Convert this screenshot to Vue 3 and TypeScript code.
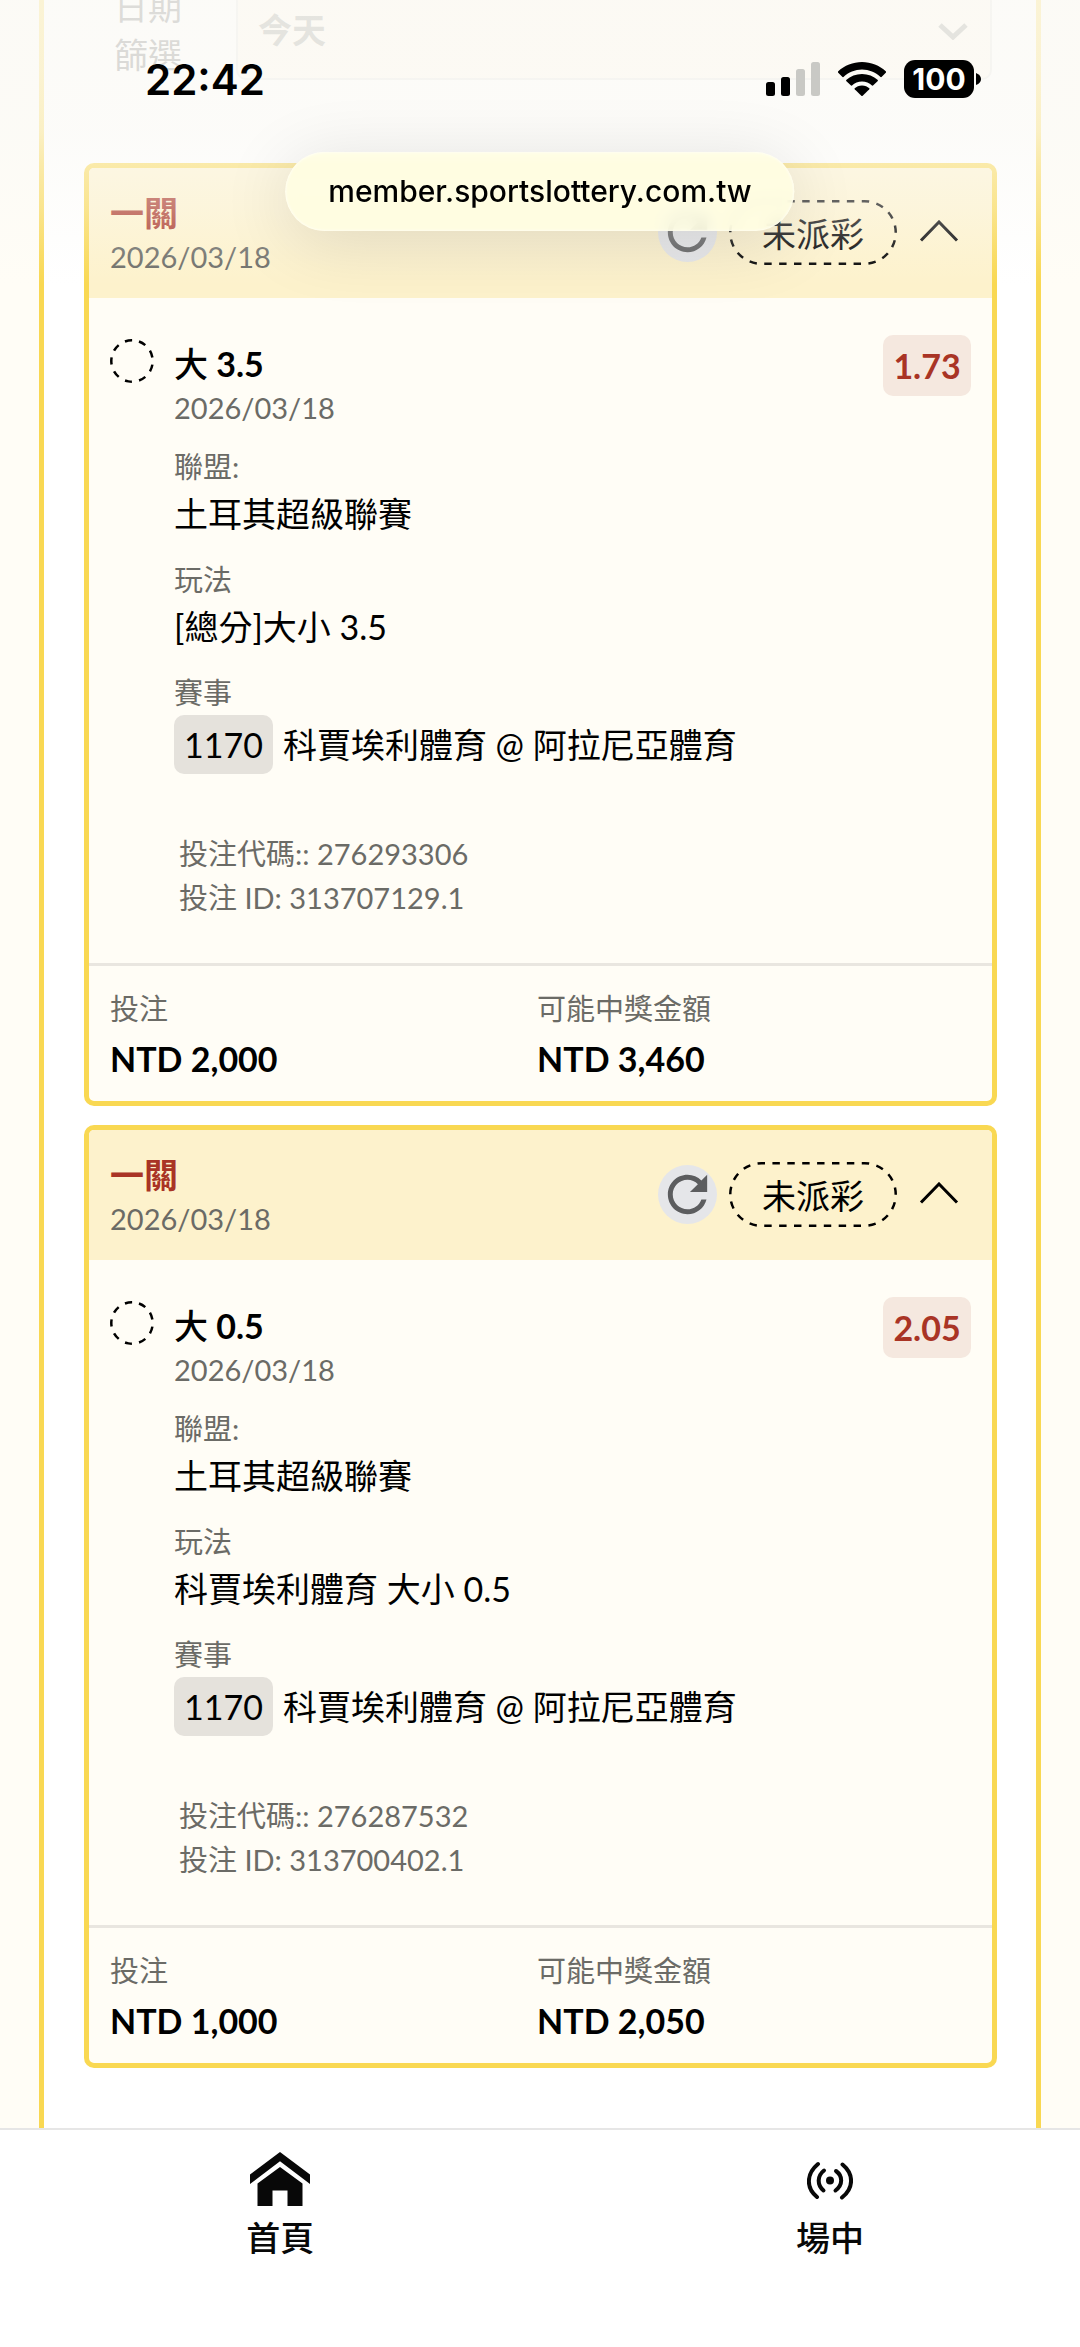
<script setup lang="ts">
interface Bet {
  id: string
  code: string
  date: string
  side: string
  line: string
  odds: string
  play: string
  stake: string
  payout: string
}

const bets: Bet[] = [
  {
    id: '313707129.1',
    code: '276293306',
    date: '2026/03/18',
    side: '大',
    line: '3.5',
    odds: '1.73',
    play: '[總分]大小 3.5',
    stake: 'NTD 2,000',
    payout: 'NTD 3,460',
  },
  {
    id: '313700402.1',
    code: '276287532',
    date: '2026/03/18',
    side: '大',
    line: '0.5',
    odds: '2.05',
    play: '科賈埃利體育 大小 0.5',
    stake: 'NTD 1,000',
    payout: 'NTD 2,050',
  },
]
</script>

<template>
  <div class="screen" lang="zh-Hant">
    <main class="content">
      <section class="panel">
        <div class="filter">
          <label class="filter-label" for="date-filter">日期篩選</label>
          <div class="filter-box">
            <select id="date-filter" class="filter-select">
              <option>今天</option>
            </select>
            <svg class="filter-arrow" viewBox="0 0 30 18" aria-hidden="true">
              <path d="M2 3 L15 15 L28 3" fill="none" stroke="currentColor" stroke-width="5" />
            </svg>
          </div>
        </div>

        <article v-for="bet in bets" :key="bet.id" class="card">
          <header class="card-head">
            <div class="card-title">
              <h2 class="parlay">一關</h2>
              <p class="date">{{ bet.date }}</p>
            </div>
            <button type="button" class="refresh" aria-label="重新整理">
              <svg viewBox="0 0 24 24" aria-hidden="true">
                <path
                  fill="currentColor"
                  d="M17.65 6.35C16.2 4.9 14.21 4 12 4c-4.42 0-7.99 3.58-7.99 8s3.57 8 7.99 8c3.73 0 6.84-2.55 7.73-6h-2.08c-.82 2.33-3.04 4-5.65 4-3.31 0-6-2.69-6-6s2.69-6 6-6c1.66 0 3.14.69 4.22 1.78L13 11h7V4l-2.35 2.35z"
                />
              </svg>
            </button>
            <span class="status">
              <svg class="status-outline" viewBox="0 0 168 65" aria-hidden="true">
                <rect x="1.25" y="1.25" width="165.5" height="62.5" rx="31.25" fill="none" stroke="currentColor"
                  stroke-width="2.5" pathLength="405" stroke-dasharray="7.5 7.5" stroke-dashoffset="4" />
              </svg>
              未派彩
            </span>
            <button type="button" class="toggle" aria-label="收合">
              <svg viewBox="0 0 40 24" aria-hidden="true">
                <path d="M2 20.500 L20 2 L38 20.500" fill="none" stroke="currentColor" stroke-width="3" />
              </svg>
            </button>
          </header>

          <div class="card-body">
            <svg class="pending" viewBox="0 0 44 44" aria-hidden="true">
              <circle cx="22" cy="22" r="20.700" fill="none" stroke="currentColor" stroke-width="2.5"
                pathLength="360" stroke-dasharray="20 20" transform="rotate(10 22 22)" />
            </svg>
            <div class="details">
              <h3 class="pick"><span class="side">{{ bet.side }}</span> {{ bet.line }}</h3>
              <p class="date">{{ bet.date }}</p>
              <dl class="fields">
                <div class="field">
                  <dt>聯盟:</dt>
                  <dd>土耳其超級聯賽</dd>
                </div>
                <div class="field">
                  <dt>玩法</dt>
                  <dd>{{ bet.play }}</dd>
                </div>
                <div class="field">
                  <dt>賽事</dt>
                  <dd class="match"><span class="match-no">1170</span>科賈埃利體育 @ 阿拉尼亞體育</dd>
                </div>
              </dl>
              <div class="codes">
                <p>投注代碼:: {{ bet.code }}</p>
                <p>投注 ID: {{ bet.id }}</p>
              </div>
            </div>
            <span class="odds">{{ bet.odds }}</span>
          </div>

          <dl class="card-foot">
            <div>
              <dt>投注</dt>
              <dd>{{ bet.stake }}</dd>
            </div>
            <div>
              <dt>可能中獎金額</dt>
              <dd>{{ bet.payout }}</dd>
            </div>
          </dl>
        </article>
      </section>
    </main>

    <nav class="tabs">
      <a class="tab" href="#home">
        <svg class="icon-home" viewBox="0 0 60 54" aria-hidden="true">
          <path fill="currentColor" d="M30 0 L60 22.500 V32 L30 9.300 L0 32 V22.500 Z" />
          <path fill="currentColor" d="M30 15 L52.500 31.500 V54 H37.500 V38.500 H22.500 V54 H7.500 V31.500 Z" />
        </svg>
        <span>首頁</span>
      </a>
      <a class="tab" href="#live">
        <svg class="icon-live" viewBox="0 0 46 54" aria-hidden="true">
          <g fill="none" stroke="currentColor" stroke-width="4" stroke-linecap="round">
            <path d="M11 12 C-1 22 -1 36 10 45" />
            <path d="M17 18.500 C10 24 10 33 16.500 38.500" />
            <path d="M29 19 C36 24 36 33 28.500 38.500" />
            <path d="M35.500 12.500 C47 22 47 36 35 45.500" />
          </g>
          <circle cx="23" cy="28.500" r="4" fill="currentColor" />
        </svg>
        <span>場中</span>
      </a>
    </nav>

    <div class="veil"></div>
    <div class="system-bar">
      <time class="clock">22:42</time>
      <div class="indicators">
        <svg class="signal" viewBox="0 0 54 34" aria-hidden="true">
          <rect x="0" y="20" width="9" height="14" rx="2.500" />
          <rect x="15" y="15" width="9" height="19" rx="2.500" />
          <g fill="#c9c9c5">
            <rect x="30" y="7" width="9" height="27" rx="2.500" />
            <rect x="45" y="0" width="9" height="34" rx="2.500" />
          </g>
        </svg>
        <svg class="wifi" viewBox="0 0 48 34" aria-hidden="true">
          <path d="M24 0 C15 0 6.500 3.500 0 9.500 Q-.3 10 0 10.500 L4.500 15 Q5 15.300 5.500 15 C10.500 10.300 17 7.500 24 7.500 S37.500 10.300 42.500 15 Q43 15.300 43.500 15 L48 10.500 Q48.300 10 48 9.500 C41.500 3.500 33 0 24 0 Z" />
          <path d="M24 12 C18 12 12.500 14.300 8.200 18 Q8 18.500 8.200 19 L13 23.500 Q13.500 23.800 14 23.500 C16.700 21 20.200 19.500 24 19.500 S31.300 21 34 23.500 Q34.500 23.800 35 23.500 L39.800 19 Q40 18.500 39.800 18 C35.500 14.300 30 12 24 12 Z" />
          <path d="M24 23.500 C21 23.500 18.500 24.600 16.700 26.300 Q16.300 26.800 16.700 27.200 L23.300 33.700 Q24 34.300 24.700 33.700 L31.300 27.200 Q31.700 26.800 31.300 26.300 C29.500 24.600 27 23.500 24 23.500 Z" />
        </svg>
        <div class="battery">
          <span class="battery-level">100</span>
          <svg class="battery-tip" viewBox="0 0 5 12" aria-hidden="true">
            <path d="M0 0 Q5 2 5 6 T0 12 Z" />
          </svg>
        </div>
      </div>
    </div>
    <div class="address">member.sportslottery.com.tw</div>
  </div>
</template>

<style>
body {
  margin: 0;
  background: #fffdf6;
}
</style>

<style scoped>
.screen {
  position: relative;
  display: flex;
  flex-direction: column;
  min-height: 100vh;
  overflow: hidden;
  color: #000;
  background: #fffdf6;
  font-family: Lato, "Noto Sans CJK TC", sans-serif;
  font-size: 34px;
}

h2,
h3,
p,
dl,
dd {
  margin: 0;
}

button {
  padding: 0;
  border: 0;
  background: none;
  color: inherit;
  font: inherit;
}

svg {
  display: block;
}

.content {
  display: flex;
  flex: 1;
  padding: 0 39px;
}

/* The list is scrolled, so the filter row starts above the visible area. */
.panel {
  display: flex;
  flex: 1;
  flex-direction: column;
  gap: 19px;
  margin-top: -18px;
  padding: 0 39px 60px 40px;
  border: solid #f9d852;
  border-width: 0 5px;
  background: #fff;
}

.filter {
  display: flex;
  align-items: center;
  gap: 54px;
  margin: 0 5px 64px 30px;
}

.filter-label {
  width: 68px;
  color: #666;
  line-height: 48px;
}

.filter-box {
  display: flex;
  position: relative;
  flex: 1;
  align-items: center;
}

.filter-select {
  flex: 1;
  height: 98px;
  padding: 0 20px 4px;
  appearance: none;
  border: 2px solid #e3e3e0;
  border-radius: 10px;
  background: #fff8ec;
  color: #8f9088;
  font: inherit;
  font-weight: 700;
}

.filter-arrow {
  position: absolute;
  right: 24px;
  width: 30px;
  color: #8f9088;
  pointer-events: none;
}

.card {
  overflow: hidden;
  border: 5px solid #f9d852;
  border-radius: 10px;
  background: #fffdf6;
}

.card-head {
  display: flex;
  align-items: center;
  padding: 17px 21px 19px;
  background: #fdf2cc;
}

.card-title {
  flex: 1;
  padding-top: 6px;
}

.parlay {
  color: #a93425;
  font-size: 34px;
  font-weight: 700;
  line-height: 44px;
}

.date {
  color: #6b6b66;
  font-size: 29px;
  line-height: 44px;
}

.refresh {
  width: 59px;
  height: 59px;
  border-radius: 50%;
  background: #e5e6e9;
  color: #5c5d5f;
}

.status {
  display: flex;
  position: relative;
  align-items: center;
  justify-content: center;
  width: 168px;
  height: 65px;
  margin: 0 22px 0 12px;
}

.status-outline {
  position: absolute;
  inset: 0;
}

.toggle {
  width: 40px;
  margin-right: 12px;
}

.card-body {
  display: flex;
  align-items: flex-start;
  gap: 20px;
  padding: 37px 21px 43px;
}

.pending {
  width: 44px;
  margin-top: 4px;
}

.details {
  flex: 1;
  padding-top: 7px;
}

.pick {
  font-size: 34px;
  font-weight: 700;
  line-height: 44px;
}

.side {
  font-weight: 500;
}

.fields {
  display: flex;
  flex-direction: column;
  gap: 19px;
  padding-top: 17px;
}

.field dt {
  color: #6b6b66;
  font-size: 29px;
  line-height: 40px;
}

.field dd {
  line-height: 54px;
}

.field .match {
  display: flex;
  align-items: center;
  gap: 10px;
  padding-top: 2px;
}

.match-no {
  padding: 0 10px;
  border-radius: 10px;
  background: #e5e2dc;
  line-height: 59px;
}

.codes {
  padding: 58px 0 0 5px;
  color: #6b6b66;
  font-size: 29px;
  line-height: 44px;
}

.odds {
  width: 88px;
  border-radius: 10px;
  background: #f5e8df;
  color: #a93425;
  font-weight: 700;
  line-height: 61px;
  text-align: center;
}

.card-foot {
  display: grid;
  grid-template-columns: 63fr 64fr;
  padding: 21px 21px 14px;
  border-top: 3px solid #e9e6e0;
}

.card-foot dt {
  color: #6b6b66;
  font-size: 29px;
  line-height: 44px;
}

.card-foot dd {
  font-weight: 700;
  line-height: 56px;
}

.tabs {
  display: flex;
  z-index: 1;
  align-items: flex-start;
  justify-content: space-between;
  height: 195px;
  padding: 22px 20% 0 22.8%;
  border-top: 2px solid #e6e6e6;
  background: #fff;
}

.tab {
  display: flex;
  flex-direction: column;
  align-items: center;
  gap: 10px;
  color: #080808;
  font-weight: 500;
  line-height: 44px;
  text-decoration: none;
}

.icon-home {
  width: 60px;
  height: 54px;
}

.icon-live {
  width: 46px;
  height: 54px;
}

.veil {
  position: absolute;
  inset: 0 0 auto;
  height: 285px;
  background: linear-gradient(
    rgba(251, 250, 246, 0.8),
    rgba(251, 250, 246, 0.78) 70px,
    rgba(251, 250, 246, 0.7) 130px,
    rgba(251, 250, 246, 0.53) 165px,
    rgba(251, 250, 246, 0.36) 210px,
    rgba(251, 250, 246, 0.12) 257px,
    rgba(251, 250, 246, 0)
  );
  pointer-events: none;
}

.system-bar {
  display: flex;
  position: absolute;
  inset: 50px 99px auto 145px;
  align-items: center;
  justify-content: space-between;
  height: 58px;
  font-family: Inter, sans-serif;
}

.clock {
  font-size: 42px;
  font-weight: 600;
}

.indicators {
  display: flex;
  align-items: center;
  gap: 18px;
}

.signal {
  width: 54px;
  height: 34px;
}

.wifi {
  width: 48px;
  height: 34px;
}

.battery {
  display: flex;
  align-items: center;
  gap: 2px;
}

.battery-level {
  width: 70px;
  border-radius: 11px;
  background: #000;
  color: #fff;
  font-size: 30px;
  font-weight: 700;
  line-height: 38px;
  text-align: center;
}

.battery-tip {
  width: 5px;
  height: 12px;
}

.address {
  position: absolute;
  top: 152px;
  left: 50%;
  padding: 0 43px;
  transform: translateX(-50%);
  border-radius: 40px;
  background: rgba(255, 254, 226, 0.86);
  box-shadow: 0 10px 70px rgba(0, 0, 0, 0.12), inset 0 0 3px #fff;
  backdrop-filter: blur(7px);
  font-family: Inter, sans-serif;
  font-size: 30px;
  font-weight: 500;
  line-height: 79px;
  white-space: nowrap;
}
</style>
